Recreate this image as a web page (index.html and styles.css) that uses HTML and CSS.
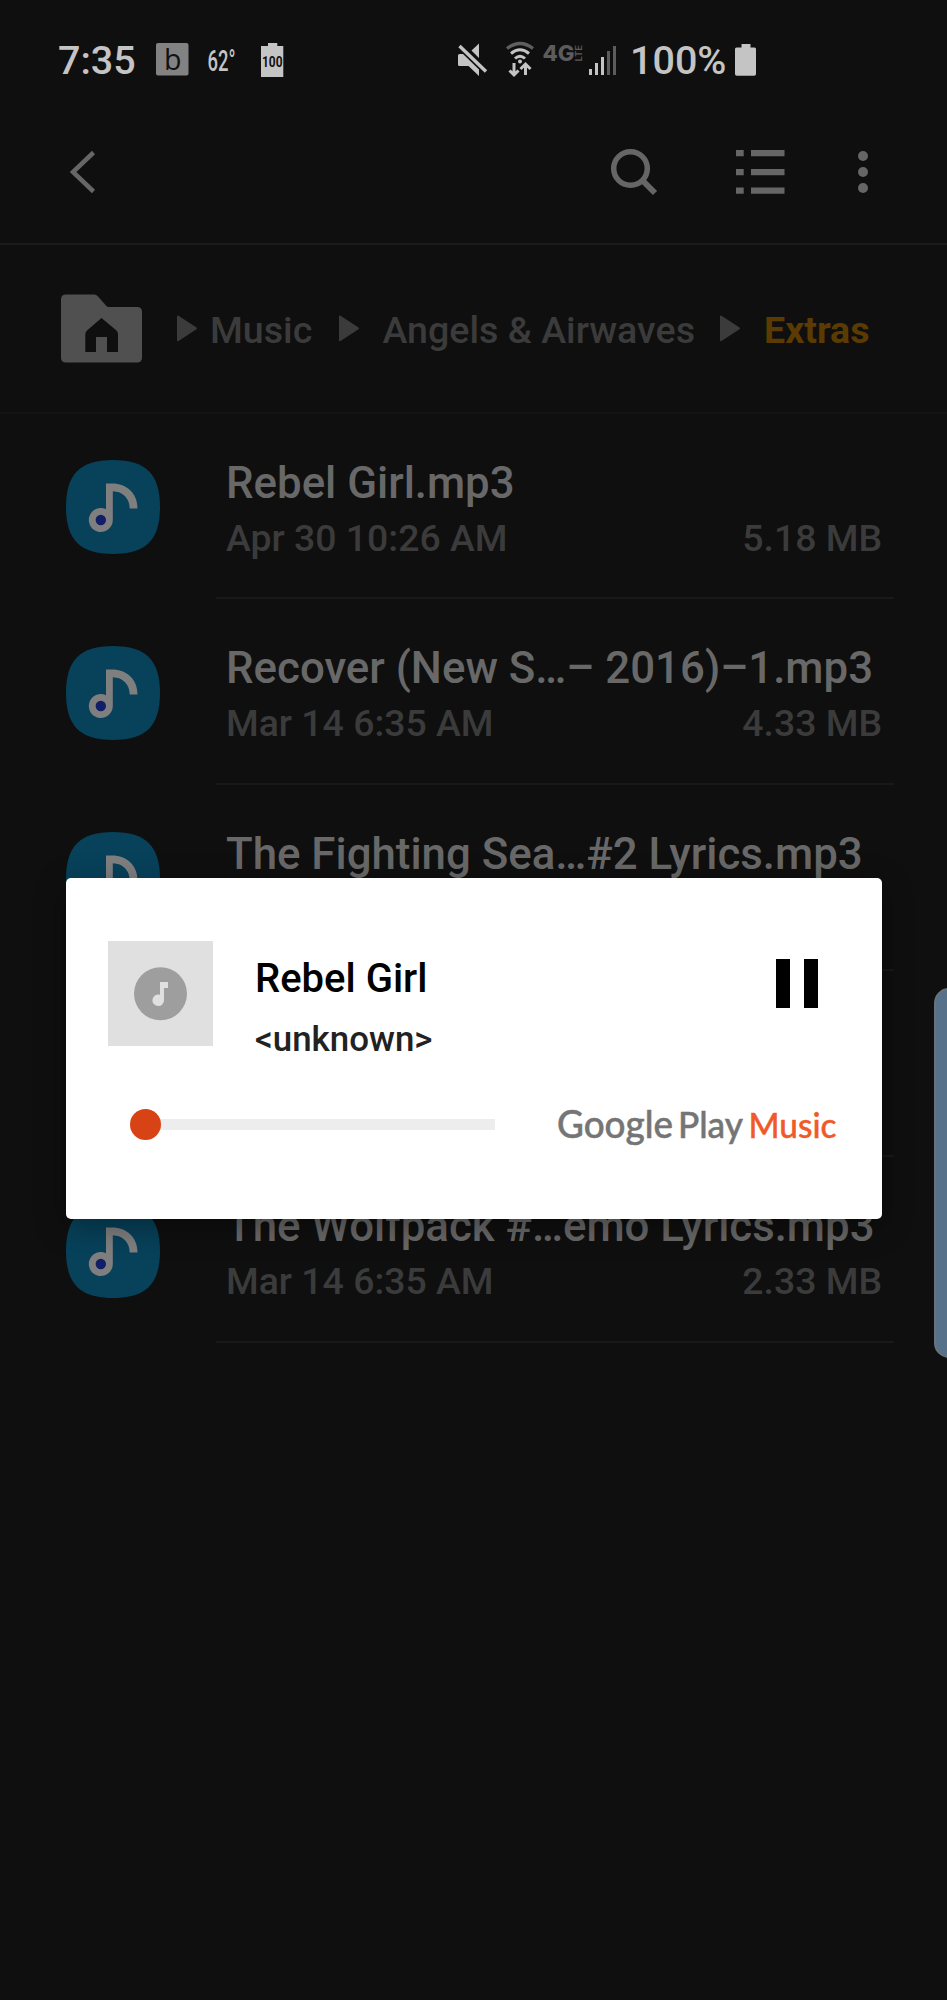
FILE: index.html
```html
<!DOCTYPE html>
<html lang="en">
<head>
<meta charset="utf-8">
<title>My Files</title>
<link rel="stylesheet" href="styles.css">
</head>
<body>
<svg class="defs" width="0" height="0" aria-hidden="true">
  <symbol id="note" viewBox="0 0 94 94">
    <path class="squircle" d="M47 0C80 0 94 14 94 47S80 94 47 94 0 80 0 47 14 0 47 0Z"/>
    <path class="tune" d="M40 23.500h6C61 23.500 71.500 33.500 71.500 48.500H63.700C63.700 38.500 57 31.500 46.800 31.300V60a12 12 0 1 1-6.800-10.800Z"/>
    <circle class="dot" cx="34.800" cy="60" r="5.200"/>
  </symbol>
</svg>
<main class="screen">
  <header class="status">
    <span class="clock">7:35</span>
    <svg class="s-badge" viewBox="156 41 33 40"><rect x="156" y="43" width="32.500" height="32.500" rx="2" fill="#828282"/><text x="164" y="70" font-size="29" fill="#111" font-family="Open Sans, sans-serif" textLength="17.500" lengthAdjust="spacingAndGlyphs">b</text></svg>
    <svg class="s-temp" viewBox="208 41 28 40"><text x="207.500" y="70.500" font-size="29" font-weight="500" fill="#c4c4c4" textLength="28" lengthAdjust="spacingAndGlyphs">62°</text></svg>
    <svg class="s-bat100" viewBox="261 41 23 40"><path d="M261 46h7v-3h9.300v3h6v31H261Z" fill="#c4c4c4"/><text x="262" y="67" font-size="14.500" font-weight="700" fill="#111" textLength="20.500" lengthAdjust="spacingAndGlyphs">100</text></svg>
    <svg class="s-mute" viewBox="457 41 31 40"><path fill="#c4c4c4" d="M458 55.500Q458 54 459.500 54H463L479 69.500V76L468.500 66H459.500Q458 66 458 64.500ZM471.500 50.500L479 43.500V58Z"/><path d="M459.500 46L486 71.500" stroke="#c4c4c4" stroke-width="3.400"/></svg>
    <svg class="s-wifi" viewBox="505 41 30 40" fill="none"><path d="M507 48.500Q520 38.500 533 48.500" stroke="#5f5f5f" stroke-width="3.200"/><path d="M511 53.500Q520 46 529 53.500M515 58.500Q520 54 525 58.500" stroke="#c4c4c4" stroke-width="3"/><circle cx="520" cy="61.500" r="2" fill="#c4c4c4"/><path d="M514 63v12M509.500 70.500l4.500 4.500 4.500-4.500M525.500 75V65M520.500 69l5-5 5 5" stroke="#c4c4c4" stroke-width="3"/></svg>
    <svg class="s-lte" viewBox="542 41 42 40" fill="#5c5c5c" font-family="Inter, sans-serif"><text x="542.500" y="60.800" font-size="21.500" font-weight="800" textLength="32" lengthAdjust="spacingAndGlyphs">4G</text><text transform="translate(582 61.500) rotate(-90)" font-size="8.500" font-weight="600" textLength="16.500" lengthAdjust="spacingAndGlyphs">LTE</text></svg>
    <svg class="s-signal" viewBox="588 41 29 40"><path d="M589 69h3v6h-3ZM595 63h3v12h-3ZM601 57h3v18h-3Z" fill="#c4c4c4"/><path d="M607 51h3v24h-3ZM613 46h3v29h-3Z" fill="#5c5c5c"/></svg>
    <span class="percent">100%</span>
    <svg class="s-battery" viewBox="735 41 22 40"><path d="M736.500 47.500h5V44h9v3.500h4Q756 47.500 756 49v25q0 1.800-1.800 1.800H736.800Q735 75.800 735 74V49q0-1.500 1.500-1.500Z" fill="#c4c4c4"/></svg>
  </header>

  <nav class="toolbar">
    <svg class="t-back" viewBox="69 150 28 44"><path d="M93.500 152.500L73 172L93.500 191.500" fill="none" stroke="#666" stroke-width="4.500"/></svg>
    <svg class="t-search" viewBox="609 147 50 50" fill="none" stroke="#666" stroke-width="5.500"><circle cx="630.500" cy="168.500" r="16.800"/><path d="M642 180L655 193" stroke-width="6"/></svg>
    <svg class="t-list" viewBox="735 148 50 48"><path fill="#666" d="M736 150h7.700v6.300H736ZM751 150h33.500v6.300H751ZM736 169h7.700v6.300H736ZM751 169h33.500v6.300H751ZM736 187.500h7.700v6.300H736ZM751 187.500h33.500v6.300H751Z"/></svg>
    <svg class="t-more" viewBox="857 150 12 44" fill="#666"><circle cx="863" cy="156" r="5"/><circle cx="863" cy="172" r="5"/><circle cx="863" cy="188" r="5"/></svg>
  </nav>

  <nav class="crumbs">
    <svg class="folder" viewBox="61 294 81 69"><path fill="#505050" d="M66 294.500H94Q96.500 294.500 98 296.500L106 305.500Q107 307 109 307H137Q142 307 142 312V357.500Q142 362.500 137 362.500H66Q61 362.500 61 357.500V299.500Q61 294.500 66 294.500Z"/><path fill="#0f0f0f" d="M101.500 318L116.500 330.500Q118 332 118 334V352H107V337H96V352H85.300V334Q85.300 332 87 330.500Z"/></svg>
    <svg class="arrow a1" viewBox="0 0 22 27"><path d="M1 1.500Q1 0 2.500 .8L20.500 12.500Q21.800 13.300 20.500 14.200L2.500 26Q1 26.700 1 25Z"/></svg>
    <span class="crumb c1">Music</span>
    <svg class="arrow a2" viewBox="0 0 22 27"><path d="M1 1.500Q1 0 2.500 .8L20.500 12.500Q21.800 13.300 20.500 14.200L2.500 26Q1 26.700 1 25Z"/></svg>
    <span class="crumb c2">Angels &amp; Airwaves</span>
    <svg class="arrow a3" viewBox="0 0 22 27"><path d="M1 1.500Q1 0 2.500 .8L20.500 12.500Q21.800 13.300 20.500 14.200L2.500 26Q1 26.700 1 25Z"/></svg>
    <span class="crumb current">Extras</span>
  </nav>

  <section class="files">
    <article class="file"><svg class="file-icon"><use href="#note"/></svg><div class="info"><div class="name">Rebel Girl.mp3</div><div class="meta"><span>Apr 30 10:26 AM</span><span>5.18 MB</span></div></div></article>
    <article class="file"><svg class="file-icon"><use href="#note"/></svg><div class="info"><div class="name">Recover (New S…– 2016)–1.mp3</div><div class="meta"><span>Mar 14 6:35 AM</span><span>4.33 MB</span></div></div></article>
    <article class="file"><svg class="file-icon"><use href="#note"/></svg><div class="info"><div class="name">The Fighting Sea…#2 Lyrics.mp3</div></div></article>
    <article class="file"><div class="info"></div></article>
    <article class="file"><svg class="file-icon"><use href="#note"/></svg><div class="info"><div class="name">The Wolfpack #…emo Lyrics.mp3</div><div class="meta"><span>Mar 14 6:35 AM</span><span>2.33 MB</span></div></div></article>
  </section>

  <aside class="edge-handle"></aside>

  <section class="player">
    <div class="track">
      <svg class="art" viewBox="0 0 105 105"><rect width="105" height="105" fill="#e0e0e0"/><circle cx="52.500" cy="52.700" r="26.500" fill="#9e9e9e"/><path fill="#e0e0e0" d="M52 41h8v6h-4v12a5.800 5.800 0 1 1-4-5.200Z"/></svg>
      <div class="labels"><div class="song">Rebel Girl</div><div class="artist">&lt;unknown&gt;</div></div>
      <div class="pause"><i class="bar"></i><i class="bar"></i></div>
    </div>
    <div class="controls">
      <div class="slider"><i class="knob"></i></div>
      <svg class="brand" viewBox="557 1100 282 52" font-family="Lato, sans-serif"><g fill="#757575" stroke="#757575" stroke-width=".5"><text x="557" y="1137.500" font-size="38" textLength="116" lengthAdjust="spacingAndGlyphs">Google</text><text x="678" y="1137.500" font-size="37.500" textLength="65" lengthAdjust="spacingAndGlyphs">Play</text></g><text x="748.500" y="1137.500" font-size="35.500" fill="#f05a28" stroke="#f05a28" stroke-width=".4" textLength="88" lengthAdjust="spacingAndGlyphs">Music</text></svg>
    </div>
  </section>
</main>
</body>
</html>
```
FILE: styles.css
```css
* { box-sizing: border-box; }
body { margin: 0; background: #0f0f0f; font-family: Roboto, sans-serif; font-weight: 500; }
svg { display: block; flex: none; overflow: visible; }
.defs { position: absolute; }
.screen { position: relative; width: 947px; height: 2000px; overflow: hidden; background: #0f0f0f; }

.status { display: flex; align-items: center; height: 122px; padding-left: 58px; color: #c4c4c4; font-size: 39.5px; line-height: 50px; }
.status svg { height: 40px; }
.clock { width: 98px; }
.s-badge { width: 33px; margin-right: 19px; }
.s-temp { width: 28px; margin-right: 25px; }
.s-bat100 { width: 23px; margin-right: 173px; }
.s-mute { width: 31px; margin-right: 17px; }
.s-wifi { width: 30px; margin-right: 7px; }
.s-lte { width: 42px; margin-right: 4px; }
.s-signal { width: 29px; margin-right: 13px; }
.percent { width: 105px; }
.s-battery { width: 22px; }

.toolbar { display: flex; align-items: center; height: 123px; padding: 0 0 21px 69px; border-bottom: 2px solid #1b1b1b; }
.t-back { width: 28px; height: 44px; margin-right: 512px; }
.t-search { width: 50px; height: 50px; margin-right: 76px; }
.t-list { width: 50px; height: 48px; margin-right: 72px; }
.t-more { width: 12px; height: 44px; }

.crumbs { display: flex; align-items: center; height: 168.5px; padding-left: 61px; border-bottom: 2px solid #141414; color: #3b3b3b; font-size: 37.6px; line-height: 48px; white-space: nowrap; }
.folder { width: 81px; height: 69px; margin-right: 34px; }
.arrow { width: 22px; height: 27px; fill: #3b3b3b; }
.crumb { padding-top: 4px; }
.a1 { margin-right: 12px; }
.c1 { width: 128px; }
.a2 { margin-right: 22.5px; }
.c2 { width: 336.5px; }
.a3 { margin-right: 23px; }
.current { color: #5c3b02; font-weight: 700; }

.file { display: flex; height: 185.9px; padding-left: 66px; }
.file-icon { width: 94px; height: 94px; margin: 46.5px 56px 0 0; }
.squircle { fill: #07415a; }
.tune { fill: #7f7f7f; }
.dot { fill: #101f68; }
.info { width: 678px; margin-left: auto; margin-right: 53px; padding: 41px 12px 0 10px; border-bottom: 2px solid #191919; }
.name { height: 56px; margin-bottom: 2px; color: #686868; font-size: 43.8px; line-height: 56px; white-space: nowrap; }
.meta { display: flex; justify-content: space-between; color: #3b3b3b; font-size: 37.4px; line-height: 50px; }

.edge-handle { position: absolute; left: 934px; top: 988px; width: 30px; height: 370px; border: 2px solid #66727c; border-radius: 15px; background: #58718a; }

.player { position: absolute; left: 66px; top: 878px; width: 815.5px; height: 341px; padding: 63px 42px 0; border-radius: 5px; background: #fff; box-shadow: 0 8px 30px rgba(0, 0, 0, .35); }
.track { display: flex; height: 119px; }
.art { width: 105px; height: 105px; margin-right: 42px; }
.labels { flex: 1; padding-top: 13px; white-space: nowrap; }
.song { color: #000; font-size: 40px; line-height: 50px; }
.artist { margin-top: 13px; color: #222; font-size: 34.9px; line-height: 46px; }
.pause { display: flex; gap: 14px; padding: 17.5px 21.5px 0 0; }
.bar { width: 14px; height: 49px; background: #000; }
.controls { display: flex; align-items: flex-start; margin-top: 40px; }
.slider { display: flex; flex: none; align-items: center; width: 350px; height: 32px; margin: 8.5px 62px 0 37px; background: linear-gradient(#ededed, #ededed) 0 50% / 100% 11px no-repeat; }
.knob { width: 31.5px; height: 31.5px; margin-left: -15.5px; border-radius: 50%; background: #d84315; }
.brand { width: 282px; height: 52px; }
```
